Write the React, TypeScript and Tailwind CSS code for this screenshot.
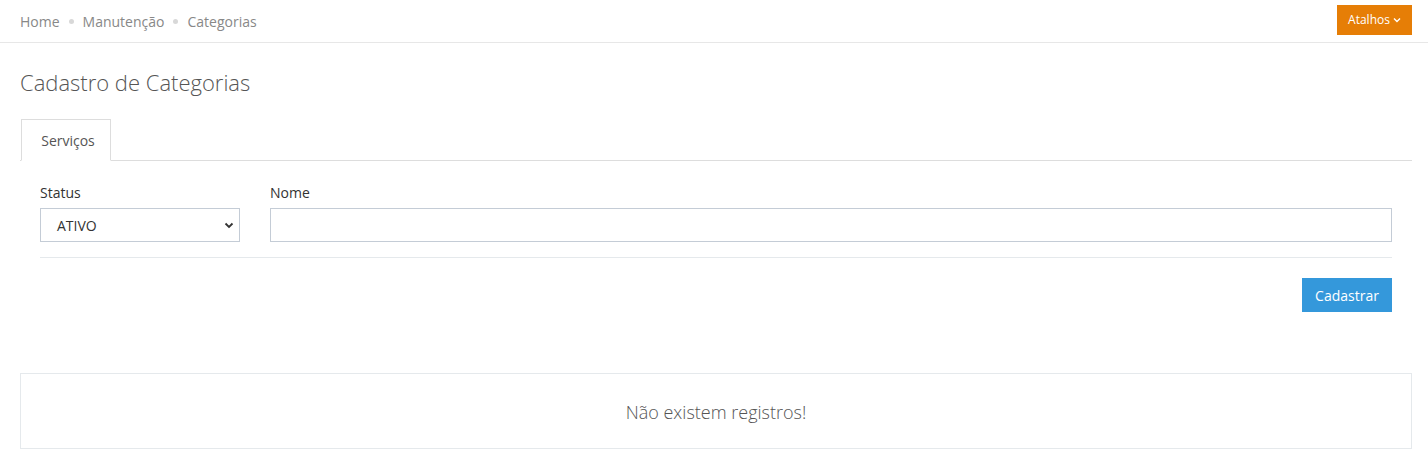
import React from "react";

export default function App() {
  return (
    <div className="w-[1428px] h-[466px] bg-white text-[#555] overflow-hidden" style={{ fontFamily: '"Open Sans", "Liberation Sans", sans-serif' }}>
      <div className="h-[43px] border-b border-[#e7e7e7] flex items-center justify-between pl-5 pr-[16px]">
        <div className="flex items-center text-[14px] text-[#888]">
          <span>Home</span>
          <span className="mx-[9px] w-[5px] h-[5px] rounded-full bg-[#d8d8d8] inline-block"></span>
          <span>Manutenção</span>
          <span className="mx-[9px] w-[5px] h-[5px] rounded-full bg-[#d8d8d8] inline-block"></span>
          <span>Categorias</span>
        </div>
        <button className="h-[30px] w-[75px] mt-[-3px] bg-[#e67e06] text-white text-[12px] flex items-center justify-center gap-[3px]">
          Atalhos
          <svg width="8" height="6" viewBox="0 0 8 6" fill="none" stroke="white" strokeWidth="1.4"><path d="M1 1.5l3 3 3-3" /></svg>
        </button>
      </div>
      <div className="pl-5 pr-[16px]">
        <h1 className="text-[22px] font-light text-[#555] mt-[24px] leading-[30px]">Cadastro de Categorias</h1>
        <div className="mt-[22px] border-b border-[#ddd] flex">
          <div className="ml-[1px] w-[90px] h-[42px] border border-[#ddd] border-b-white -mb-[1px] bg-white flex items-center justify-center pl-[4px] text-[14px] text-[#555]">Serviços</div>
        </div>
        <div className="px-5 pt-[22px]">
          <div className="flex gap-[30px]">
            <div className="w-[200px]">
              <label className="block text-[14px] text-[#333] leading-[20px] mb-[5px]">Status</label>
              <div className="relative h-[34px] border border-[#c4ccd6] flex items-center pl-[16px] text-[14px] text-[#333]">
                ATIVO
                <svg className="absolute right-[5px] top-[13px]" width="10" height="7" viewBox="0 0 10 7" fill="none" stroke="#333" strokeWidth="1.8"><path d="M1.5 1.5l3.5 3.5 3.5-3.5" /></svg>
              </div>
            </div>
            <div className="flex-1">
              <label className="block text-[14px] text-[#333] leading-[20px] mb-[5px]">Nome</label>
              <div className="h-[34px] border border-[#c4ccd6]"></div>
            </div>
          </div>
          <div className="mt-[15px] border-t border-[#e5e9ec]"></div>
          <div className="flex justify-end mt-[20px]">
            <button className="w-[90px] h-[34px] bg-[#3498db] text-white text-[14px]">Cadastrar</button>
          </div>
        </div>
        <div className="mt-[61px] h-[76px] border border-[#e5e9ec] flex items-center justify-center pt-[2px] text-[18px] font-light text-[#555]">Não existem registros!</div>
      </div>
    </div>
  );
}
